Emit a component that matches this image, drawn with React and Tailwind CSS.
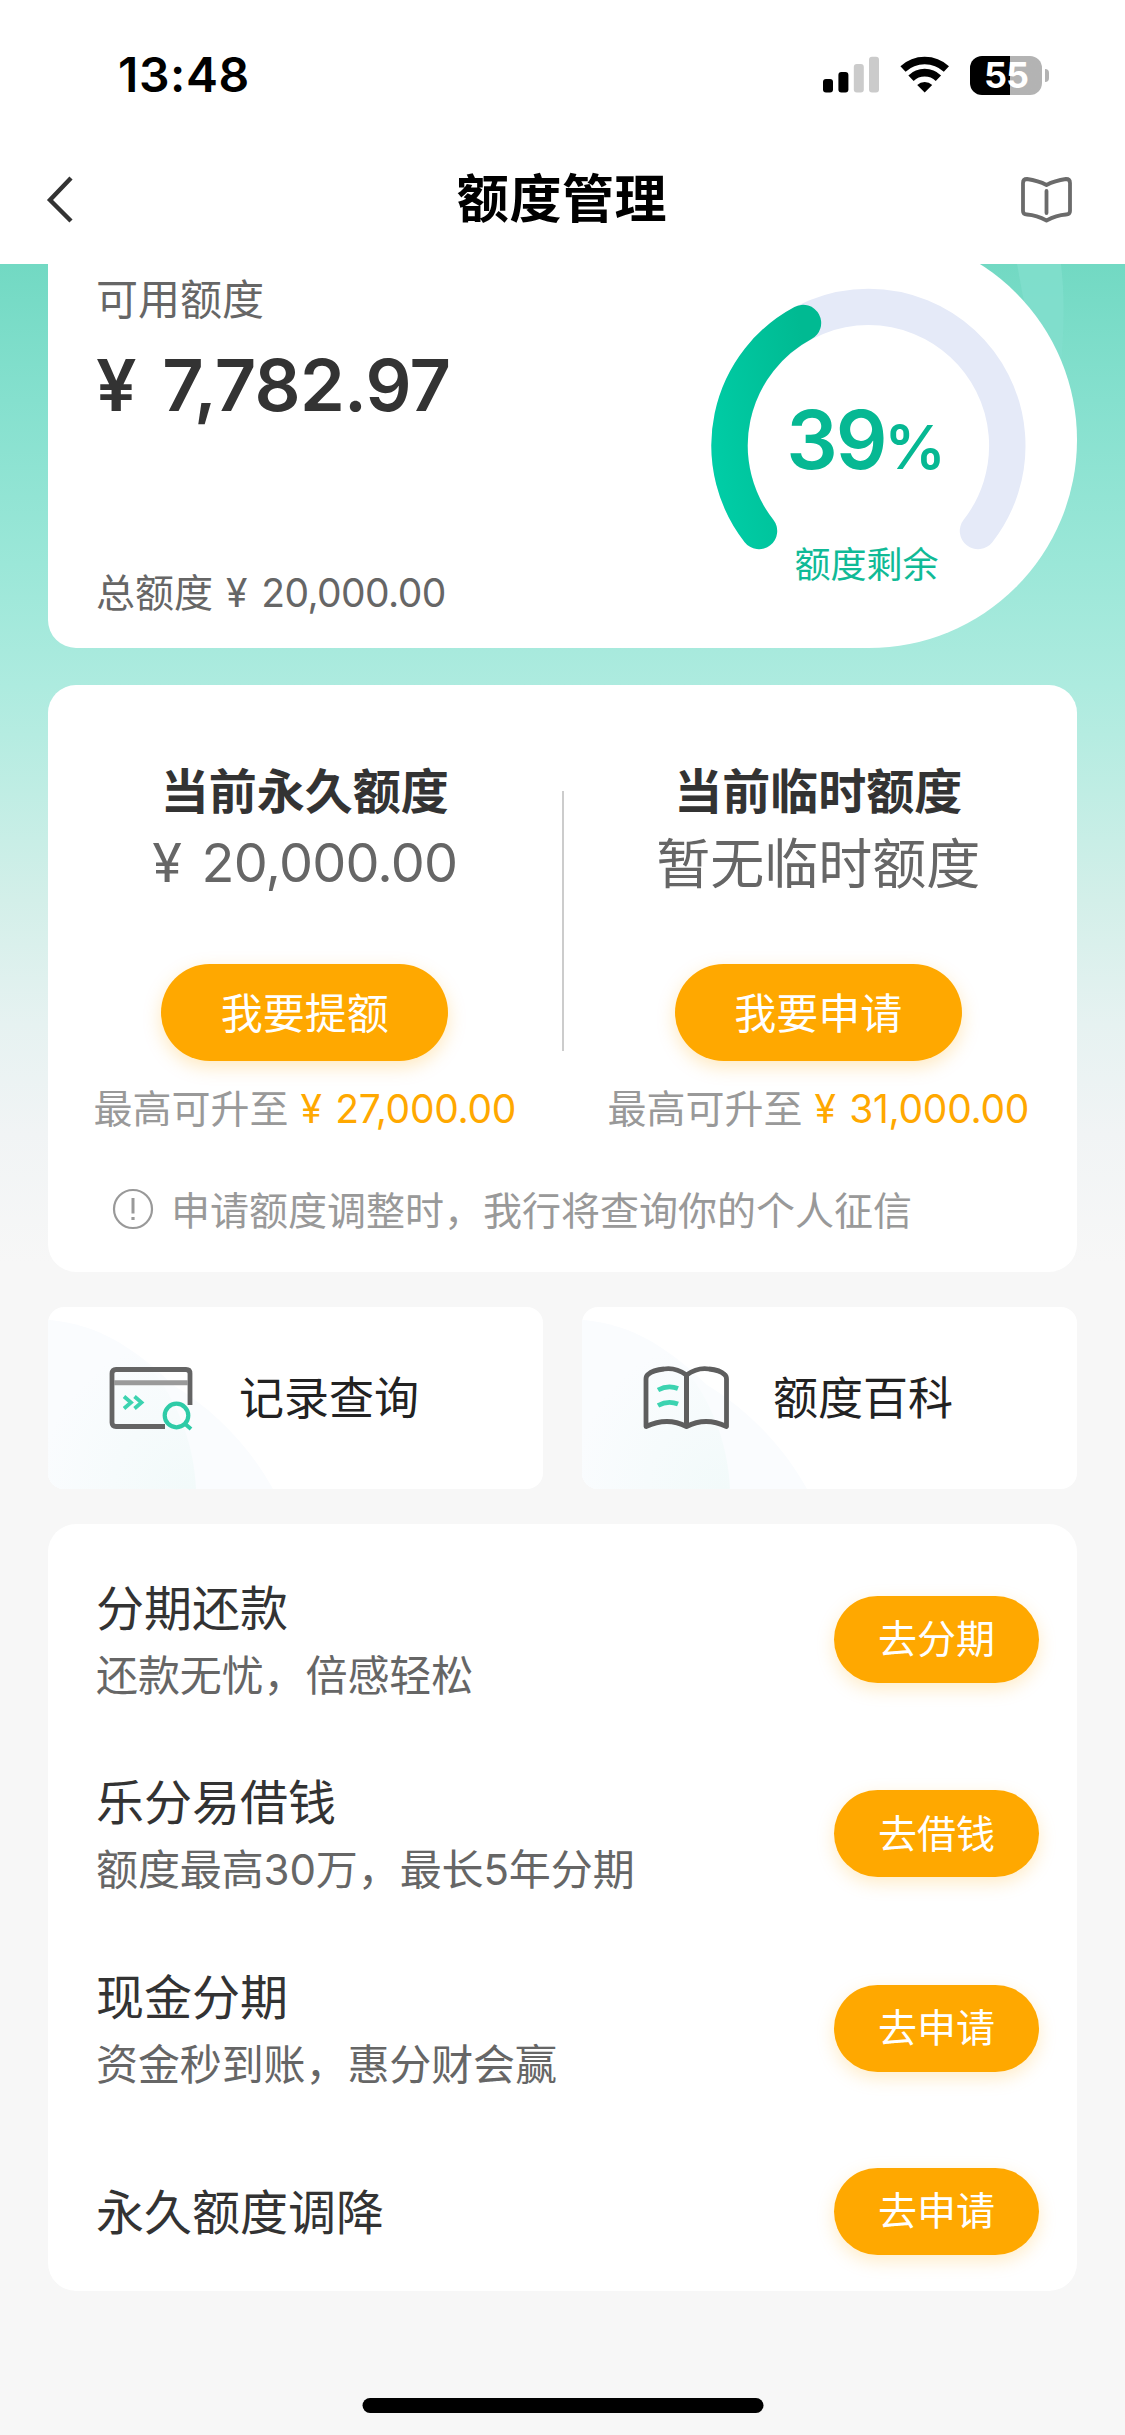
import React from "react";

const FONT = "font-['Inter','Noto_Sans_CJK_SC',sans-serif]";

function StatusBar() {
  return (
    <div className="flex h-[132px] items-start justify-between pl-[118px] pr-[76px]">
      <span className="mt-[45px] text-[48px] leading-[60px] font-semibold tracking-[0.6px] text-black">13:48</span>
      <div className="mt-[55px] flex h-[40px] items-center">
        <svg width="56" height="40" viewBox="0 0 56 40">
          <rect x="0" y="24" width="10" height="13.5" rx="3" fill="#000" />
          <rect x="15.4" y="17" width="10" height="20.5" rx="3" fill="#000" />
          <rect x="30.8" y="9" width="10" height="28.5" rx="3" fill="#cbcbcb" />
          <rect x="46" y="1.7" width="10" height="35.8" rx="3" fill="#cbcbcb" />
        </svg>
        <svg className="ml-[21px]" width="50" height="40" viewBox="0 0 50 40" fill="none">
          <path d="M3 14a31.9 31.9 0 0 1 43.4 0" stroke="#000" strokeWidth="7.6" />
          <path d="M11 23.2a19.7 19.7 0 0 1 27.4 0" stroke="#000" strokeWidth="7.6" />
          <path d="M24.7 37.6 17.2 30a11 11 0 0 1 15 0z" fill="#000" />
        </svg>
        <div className="ml-[20px] flex h-[39px] w-[72px] items-center justify-center rounded-[12px] bg-linear-to-r from-black from-55% to-[#b3b3b3] to-55%">
          <span className="text-[36px] leading-[39px] font-bold tracking-[-1px] text-white">55</span>
        </div>
        <div className="ml-[3px] h-[13px] w-[4px] rounded-r-full bg-[#b3b3b3]" />
      </div>
    </div>
  );
}

function NavBar() {
  return (
    <div className="grid h-[132px] grid-cols-[1fr_auto_1fr] items-center pt-[2px] pl-[46px] pr-[52px]">
      <svg width="30" height="48" viewBox="0 0 30 48" fill="none">
        <path d="M25 3 4 25 25 46" stroke="#333" strokeWidth="4.4" />
      </svg>
      <h1 className="mt-[2px] ml-[5px] text-[52px] leading-[64px] font-bold tracking-[0.6px] text-black">额度管理</h1>
      <svg className="justify-self-end" width="54" height="48" viewBox="0 0 54 48" fill="none" stroke="#6b6b6b" strokeWidth="3.8" strokeLinecap="round" strokeLinejoin="round">
        <path d="M27.5 10C21 6.500 15 5 8 4Q4 4 4 8V36Q4 39.500 8 39.500C15 40 22 42.500 27.500 45.500C33 42.500 40 40 47 39.500Q51 39.500 51 36V8Q51 4 47 4C40 5 34 6.500 27.500 10Z" />
        <path d="M27.500 16V38" />
      </svg>
    </div>
  );
}

function Gauge() {
  return (
    <div className="relative mt-[56px] mr-[51px] h-[340px] w-[315px]">
      <svg width="315" height="270" viewBox="0 0 315 270" fill="none">
        <defs>
          <linearGradient id="arc" gradientUnits="userSpaceOnUse" x1="0" y1="170" x2="110" y2="150">
            <stop offset="0" stopColor="#00cda6" />
            <stop offset="1" stopColor="#00ba92" />
          </linearGradient>
        </defs>
        <path d="M48 243A138.800 138.800 0 1 1 267 243" stroke="#e5eaf8" strokeWidth="36.4" strokeLinecap="round" />
        <path d="M48 243A138.800 138.800 0 0 1 92 35" stroke="url(#arc)" strokeWidth="36.4" strokeLinecap="round" />
      </svg>
      <div className="absolute inset-x-0 top-[102px] flex items-baseline justify-center pr-[5px] leading-[100px] font-semibold text-[#06b893]">
        <span className="text-[81px] tracking-[-2px]">39</span>
        <span className="-ml-px text-[61px]">%</span>
      </div>
      <div className="absolute inset-x-0 top-[252px] pr-[4px] text-center text-[36px] leading-[50px] text-[#10ba96]">额度剩余</div>
    </div>
  );
}

function BalanceCard() {
  return (
    <section className="mx-[48px] -mt-[32px] flex h-[416px] justify-between rounded-l-[28px] rounded-r-[208px] bg-white pl-[48px]">
      <div className="pt-[38px]">
        <div className="text-[42px] leading-[60px] text-[#666]">可用额度</div>
        <div className="mt-[5px] text-[72px] leading-[100px] font-semibold tracking-[-0.7px] [word-spacing:9px] text-[#333]">¥ 7,782.97</div>
        <div className="mt-[131px] text-[39px] leading-[54px] text-[#666]">
          总额度 <span className="ml-[2px] tracking-[-0.6px] [word-spacing:4px]">¥ 20,000.00</span>
        </div>
      </div>
      <Gauge />
    </section>
  );
}

const QUOTAS = [
  { title: "当前永久额度", value: "¥ 20,000.00", action: "我要提额", max: "¥ 27,000.00" },
  { title: "当前临时额度", value: "暂无临时额度", action: "我要申请", max: "¥ 31,000.00" },
];

function QuotaColumn({ title, value, action, max }) {
  const isAmount = value.startsWith("¥");
  return (
    <div className="flex flex-1 flex-col items-center">
      <h2 className="text-[48px] leading-[66px] font-bold text-[#333]">{title}</h2>
      <div className={isAmount ? "text-[54px] leading-[76px] tracking-[-0.8px] [word-spacing:6px] text-[#666]" : "relative top-[2px] text-[54px] leading-[76px] text-[#666]"}>{value}</div>
      <button className="mt-[63px] h-[97px] w-[287px] rounded-full bg-[#ffa800] pt-[2px] text-[42px] text-white shadow-[0_6px_18px_rgba(255,168,0,0.25)]">
        {action}
      </button>
      <div className="mt-[20px] text-[39px] leading-[55px] whitespace-nowrap text-[#999]">
        最高可升至 <span className="ml-px tracking-[-0.3px] [word-spacing:3px] text-[#ffa800]">{max}</span>
      </div>
    </div>
  );
}

function QuotaCard() {
  return (
    <section className="mx-[48px] mt-[37px] h-[587px] rounded-[28px] bg-white pt-[74px]">
      <div className="flex pr-[2px]">
        <QuotaColumn {...QUOTAS[0]} />
        <div className="mt-[32px] -mr-[2px] h-[260px] w-[2px] bg-[#ccc]" />
        <QuotaColumn {...QUOTAS[1]} />
      </div>
      <div className="mt-[47px] flex items-center pl-[64px]">
        <svg className="-mt-[4px]" width="42" height="42" viewBox="0 0 42 42" fill="none" stroke="#999">
          <circle cx="21" cy="21" r="19" strokeWidth="2.2" />
          <path d="M21 10V25.500" strokeWidth="3" />
          <path d="M21 29V32" strokeWidth="3.200" />
        </svg>
        <p className="ml-[17px] text-[39px] leading-[56px] text-[#999]">申请额度调整时，我行将查询你的个人征信</p>
      </div>
    </section>
  );
}

function RecordIcon() {
  return (
    <svg width="88" height="68" viewBox="0 0 88 68" fill="none">
      <path d="M58 62.500H9Q5 62.500 5 58.500V9.500Q5 5.500 9 5.500H79Q83 5.500 83 9.500V41" stroke="#646464" strokeWidth="4.800" />
      <path d="M7 18.800H81" stroke="#9a9a9a" strokeWidth="5" />
      <path d="M17 32.500 24 38.500 17 44.500M27.500 32.500 34.500 38.500 27.500 44.500" stroke="#3cd3b0" strokeWidth="3.800" />
      <circle cx="69.500" cy="51.500" r="11.800" stroke="#2ecba7" strokeWidth="4.200" />
      <path d="M77 59 84 65" stroke="#2ecba7" strokeWidth="4" />
    </svg>
  );
}

function WikiIcon() {
  return (
    <svg width="88" height="68" viewBox="0 0 88 68" fill="none" strokeLinejoin="round">
      <path d="M45.500 11C37 5 29 4 23 5Q12 6 7 10.500Q5 12 5 15V62.500C19 56 33 56 45.500 62.500C58 56 72 56 85.500 62.500V15Q85.500 12 83.500 10.500Q79 6 68 5C62 4 54 5 45.500 11Z" stroke="#5e5e5e" strokeWidth="4.800" />
      <path d="M45.500 11V61.500" stroke="#5e5e5e" strokeWidth="5" />
      <path d="M17 26Q27 20.500 37 24.500M17 41.500Q27 36 37 40" stroke="#3cd3b0" strokeWidth="4.800" />
    </svg>
  );
}

function Swoosh({ id }) {
  return (
    <svg className="absolute inset-0" width="240" height="182" viewBox="0 0 240 182">
      <defs>
        <radialGradient id={id} gradientUnits="userSpaceOnUse" cx="140" cy="182" r="150">
          <stop offset="0" stopColor="#f2fafa" />
          <stop offset="1" stopColor="#fafcfe" />
        </radialGradient>
      </defs>
      <path d="M0 13C50 17 88 42 125 78C170 105 205 145 225 182H0Z" fill="#fafcfe" />
      <path d="M0 13C50 17 88 42 108 68C132 100 146 140 148 182H0Z" fill={`url(#${id})`} />
    </svg>
  );
}

function QuickCard({ id, icon, label }) {
  return (
    <div className="relative flex h-[182px] flex-1 items-center overflow-hidden rounded-[16px] bg-white pl-[59px]">
      <Swoosh id={id} />
      <div className="relative">{icon}</div>
      <span className="relative ml-[44px] pt-px text-[45px] leading-[60px] text-[#222]">{label}</span>
    </div>
  );
}

const SERVICES = [
  { title: "分期还款", note: "还款无忧，倍感轻松", action: "去分期" },
  { title: "乐分易借钱", note: "额度最高30万，最长5年分期", action: "去借钱" },
  { title: "现金分期", note: "资金秒到账，惠分财会赢", action: "去申请" },
  { title: "永久额度调降", action: "去申请" },
];

function ServiceRow({ title, note, action }) {
  return (
    <div className={note ? "flex h-[194.5px] items-center justify-between" : "flex h-[171px] items-center justify-between"}>
      <div className={note ? "pt-[6px]" : "pt-[3px]"}>
        <div className="text-[48px] leading-[66px] text-[#333]">{title}</div>
        {note && <div className="text-[42px] leading-[67px] tracking-[-0.1px] text-[#666]">{note}</div>}
      </div>
      <button className="h-[87px] w-[205px] rounded-full bg-[#ffa800] text-[39px] text-white shadow-[0_6px_18px_rgba(255,168,0,0.22)]">
        {action}
      </button>
    </div>
  );
}

export default function App() {
  return (
    <div className={`${FONT} relative flex h-[2435px] w-[1125px] flex-col overflow-hidden bg-[#f7f7f7]`}>
      <header className="h-[264px] shrink-0 bg-white">
        <StatusBar />
        <NavBar />
      </header>
      <main className="relative flex-1 overflow-hidden bg-[linear-gradient(180deg,#72d9c3_0px,#85e0ce_136px,#9be7d8_300px,#adebdf_421px,#b5ece1_470px,#d3efe9_636px,#e6f2f1_760px,#f1f4f5_870px,#f7f7f7_1000px)]">
        <svg className="absolute top-0 right-[60px]" width="60" height="120" viewBox="0 0 60 120">
          <path d="M12 0H56Q62 50 54 120H40Q22 60 12 0Z" fill="#82dfcd" fillOpacity="0.8" />
        </svg>
        <div className="relative flow-root">
          <BalanceCard />
          <QuotaCard />
          <div className="mx-[48px] mt-[35px] flex gap-[39px]">
            <QuickCard id="swoosh-record" icon={<RecordIcon />} label="记录查询" />
            <QuickCard id="swoosh-wiki" icon={<WikiIcon />} label="额度百科" />
          </div>
          <section className="mx-[48px] mt-[35px] h-[767px] rounded-[28px] bg-white pt-[18px] pr-[38px] pl-[48px]">
            {SERVICES.map((s) => (
              <ServiceRow key={s.title} {...s} />
            ))}
          </section>
        </div>
      </main>
      <div className="absolute bottom-[22px] left-1/2 h-[15px] w-[401px] -translate-x-1/2 rounded-full bg-black" />
    </div>
  );
}
